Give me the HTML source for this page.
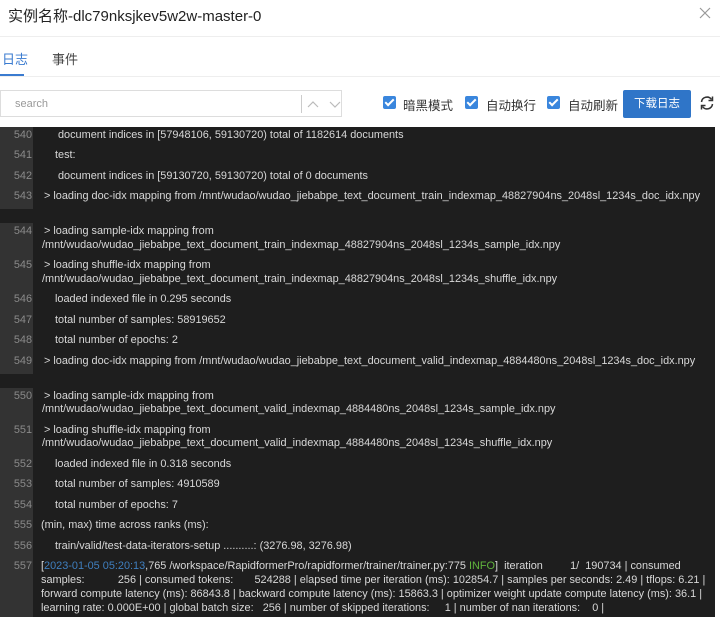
<!DOCTYPE html>
<html><head><meta charset="utf-8"><style>
body{margin:0;width:720px;height:621px;background:#fff;font-family:"Liberation Sans","Noto Sans CJK SC",sans-serif;position:relative;overflow:hidden}
.a{position:absolute;white-space:nowrap}
.title{left:8px;top:5px;font-size:15px;color:#222}
.hr{position:absolute;left:0;right:0;height:1px;background:#eee}
.tab{top:49px;font-size:13px}
.search{position:absolute;left:0;top:90px;width:342px;height:27px;border:1px solid #ddd;box-sizing:border-box}
.cb{position:absolute;top:96px;width:13px;height:13px;background:#3a86dd;border-radius:2px}
.cb:after{content:"";position:absolute;left:4px;top:1px;width:3px;height:7px;border:solid #fff;border-width:0 2px 2px 0;transform:rotate(45deg)}
.lab{top:95px;font-size:12.5px;color:#333}
.btn{position:absolute;left:623px;top:90px;width:68px;height:28px;background:#2f75c8;border-radius:2px;color:#fff;font-size:11.5px;text-align:center;line-height:28px}
.log{position:absolute;left:0;top:127px;width:715px;height:490px;background:#1e1e1e;font-size:10.9px;color:#d8d8d8;overflow:hidden}
.g{position:absolute;left:0;width:33px;background:#333}
.n{position:absolute;right:683px;color:#8a8a8a;text-align:right}
.t{position:absolute;white-space:nowrap}
</style></head><body>
<div class="a title">实例名称-dlc79nksjkev5w2w-master-0</div>
<svg style="position:absolute;left:699px;top:7px" width="12" height="12"><path d="M1 1L11 11M11 1L1 11" stroke="#999" stroke-width="1.2"/></svg>
<div class="hr" style="top:36px"></div>
<div class="a tab" style="left:2px;color:#3a7bd0">日志</div>
<div class="a tab" style="left:52px;color:#444">事件</div>
<div style="position:absolute;left:0;top:74px;width:24px;height:2px;background:#3a7bd0"></div>
<div class="hr" style="top:76px"></div>
<div class="search"><span class="a" style="left:14px;top:7px;font-size:11px;color:#999">search</span>
<div style="position:absolute;left:300px;top:4px;width:1px;height:18px;background:#ccc"></div>
<svg style="position:absolute;left:305px;top:7px" width="36" height="12"><path d="M2 9L7 4L12 9M24 4L29 9L34 4" fill="none" stroke="#bbb" stroke-width="1.2"/></svg></div>
<div class="cb" style="left:383px"></div><div class="a lab" style="left:403px">暗黑模式</div>
<div class="cb" style="left:465px"></div><div class="a lab" style="left:486px">自动换行</div>
<div class="cb" style="left:547px"></div><div class="a lab" style="left:568px">自动刷新</div>
<div class="btn">下载日志</div>
<svg style="position:absolute;left:699px;top:95px" width="16" height="16" viewBox="0 0 16 16"><path d="M2.5 7A5.5 5.5 0 0 1 12.5 4.5M13.5 9A5.5 5.5 0 0 1 3.5 11.5" fill="none" stroke="#333" stroke-width="1.5"/><path d="M13.5 1.5V5.5H9.5M2.5 14.5V10.5H6.5" fill="none" stroke="#333" stroke-width="1.5"/></svg>
<div class="log">
<div class="g" style="top:0;height:82px"></div>
<div class="g" style="top:96px;height:151px"></div>
<div class="g" style="top:261px;height:229px"></div>
<div class="n" style="top:2px">540</div><div class="t" style="left:58px;top:2px">document indices in [57948106, 59130720) total of 1182614 documents</div>
<div class="n" style="top:22px">541</div><div class="t" style="left:55px;top:22px">test:</div>
<div class="n" style="top:43px">542</div><div class="t" style="left:58px;top:43px">document indices in [59130720, 59130720) total of 0 documents</div>
<div class="n" style="top:63px">543</div><div class="t" style="left:44px;top:63px">&gt; loading doc-idx mapping from /mnt/wudao/wudao_jiebabpe_text_document_train_indexmap_48827904ns_2048sl_1234s_doc_idx.npy</div>
<div class="n" style="top:98px">544</div><div class="t" style="left:44px;top:98px">&gt; loading sample-idx mapping from</div><div class="t" style="left:42px;top:112px">/mnt/wudao/wudao_jiebabpe_text_document_train_indexmap_48827904ns_2048sl_1234s_sample_idx.npy</div>
<div class="n" style="top:132px">545</div><div class="t" style="left:44px;top:132px">&gt; loading shuffle-idx mapping from</div><div class="t" style="left:42px;top:146px">/mnt/wudao/wudao_jiebabpe_text_document_train_indexmap_48827904ns_2048sl_1234s_shuffle_idx.npy</div>
<div class="n" style="top:166px">546</div><div class="t" style="left:55px;top:166px">loaded indexed file in 0.295 seconds</div>
<div class="n" style="top:187px">547</div><div class="t" style="left:55px;top:187px">total number of samples: 58919652</div>
<div class="n" style="top:207px">548</div><div class="t" style="left:55px;top:207px">total number of epochs: 2</div>
<div class="n" style="top:228px">549</div><div class="t" style="left:44px;top:228px">&gt; loading doc-idx mapping from /mnt/wudao/wudao_jiebabpe_text_document_valid_indexmap_4884480ns_2048sl_1234s_doc_idx.npy</div>
<div class="n" style="top:263px">550</div><div class="t" style="left:44px;top:263px">&gt; loading sample-idx mapping from</div><div class="t" style="left:42px;top:276px">/mnt/wudao/wudao_jiebabpe_text_document_valid_indexmap_4884480ns_2048sl_1234s_sample_idx.npy</div>
<div class="n" style="top:297px">551</div><div class="t" style="left:44px;top:297px">&gt; loading shuffle-idx mapping from</div><div class="t" style="left:42px;top:310px">/mnt/wudao/wudao_jiebabpe_text_document_valid_indexmap_4884480ns_2048sl_1234s_shuffle_idx.npy</div>
<div class="n" style="top:331px">552</div><div class="t" style="left:55px;top:331px">loaded indexed file in 0.318 seconds</div>
<div class="n" style="top:351px">553</div><div class="t" style="left:55px;top:351px">total number of samples: 4910589</div>
<div class="n" style="top:372px">554</div><div class="t" style="left:55px;top:372px">total number of epochs: 7</div>
<div class="n" style="top:392px">555</div><div class="t" style="left:41px;top:392px">(min, max) time across ranks (ms):</div>
<div class="n" style="top:413px">556</div><div class="t" style="left:55px;top:413px">train/valid/test-data-iterators-setup ..........: (3276.98, 3276.98)</div>
<div class="n" style="top:433px">557</div>
<div class="t" style="left:41px;top:433px">[<span style="color:#3f7fbf">2023-01-05 05:20:13</span>,765 /workspace/RapidformerPro/rapidformer/trainer/trainer.py:775 <span style="color:#5fb33c">INFO</span>]&nbsp; iteration &nbsp; &nbsp; &nbsp; &nbsp; 1/ &nbsp;190734 | consumed</div>
<div class="t" style="left:41px;top:447px">samples: &nbsp; &nbsp; &nbsp; &nbsp; &nbsp; 256 | consumed tokens: &nbsp; &nbsp; &nbsp; 524288 | elapsed time per iteration (ms): 102854.7 | samples per seconds: 2.49 | tflops: 6.21 |</div>
<div class="t" style="left:41px;top:461px">forward compute latency (ms): 86843.8 | backward compute latency (ms): 15863.3 | optimizer weight update compute latency (ms): 36.1 |</div>
<div class="t" style="left:41px;top:475px">learning rate: 0.000E+00 | global batch size: &nbsp; 256 | number of skipped iterations: &nbsp; &nbsp; 1 | number of nan iterations: &nbsp; &nbsp;0 |</div>
</div>
</body></html>
